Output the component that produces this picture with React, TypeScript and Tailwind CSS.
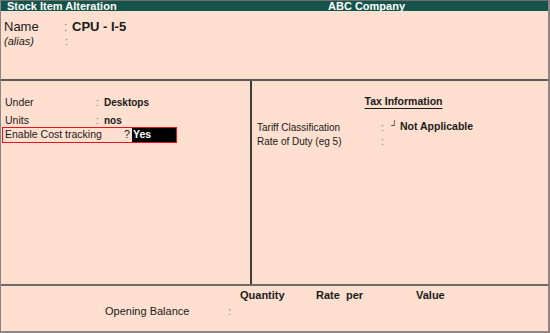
import React from "react";

export default function App() {
  const f = { fontFamily: '"Liberation Sans", Arial, sans-serif' };
  return (
    <div
      style={f}
      className="w-[550px] h-[333px] flex flex-col bg-[#ffdfcf] border-t border-t-[#6f6f6f] border-l border-l-[#8f8585] border-r-2 border-r-[#8f8585] border-b-2 border-b-[#8f8585] text-[#1a1a1a] overflow-hidden"
    >
      {/* header */}
      <div className="h-[10px] bg-[#14544a] flex items-center text-white font-bold text-[11px] leading-none">
        <span className="pl-[6px] w-[327px]">Stock Item Alteration</span>
        <span>ABC Company</span>
      </div>

      {/* name section */}
      <div className="h-[70px] pt-[8px] pl-[3px] border-b-2 border-b-[#5e5a58]">
        <div className="flex items-center h-[15px]">
          <span className="w-[60px] text-[13px]">Name</span>
          <span className="w-[8px] text-[12px] text-[#777]">:</span>
          <span className="font-bold text-[13px]">CPU - I-5</span>
        </div>
        <div className="flex items-center h-[15px]">
          <span className="w-[61px] text-[11px] italic">(alias)</span>
          <span className="text-[11px] text-[#777]">:</span>
        </div>
      </div>

      {/* middle */}
      <div className="h-[205px] flex border-b-2 border-b-[#6e6a68]">
        <div className="w-[251px] border-r-2 border-r-[#3f3b39] pt-[14px] pl-[1px] text-[10.5px]">
          <div className="flex items-center h-[15px] pl-[3px]">
            <span className="w-[91px]">Under</span>
            <span className="w-[8px] text-[#777]">:</span>
            <span className="font-bold text-[10px]">Desktops</span>
          </div>
          <div className="flex items-center h-[15px] mt-[3px] pl-[3px]">
            <span className="w-[91px]">Units</span>
            <span className="w-[8px] text-[#777]">:</span>
            <span className="font-bold text-[10px]">nos</span>
          </div>
          <div className="flex items-center h-[16px] w-[175px] border border-[#e8141b] -mt-[1px]">
            <span className="pl-[2px] w-[121px]">Enable Cost tracking</span>
            <span className="w-[8px]">?</span>
            <span className="flex-1 h-full bg-black text-white font-bold pl-[1px] flex items-center">Yes</span>
          </div>
        </div>
        <div className="flex-1 pt-[13px] pl-[5px] text-[10px]">
          <div className="flex justify-center h-[15px] items-center pl-[2px]">
            <span className="font-bold text-[10.5px] underline underline-offset-[3px]">Tax Information</span>
          </div>
          <div className="mt-[11px] flex items-center h-[14px]">
            <span className="w-[124px]">Tariff Classification</span>
            <span className="w-[10px] text-[#777]">:</span>
            <span className="w-[9px] text-[9px] font-bold leading-none -mt-[4px]">┘</span>
            <span className="font-bold text-[10.5px]">Not Applicable</span>
          </div>
          <div className="flex items-center h-[14px]">
            <span className="w-[124px]">Rate of Duty (eg 5)</span>
            <span className="text-[#777]">:</span>
          </div>
        </div>
      </div>

      {/* bottom */}
      <div className="flex-1 text-[11px] pt-[3px]">
        <div className="flex items-center h-[12px] font-bold">
          <span className="ml-[239px] w-[76px]">Quantity</span>
          <span className="w-[100px]">Rate&nbsp; per</span>
          <span>Value</span>
        </div>
        <div className="flex items-center h-[16px] mt-[2px]">
          <span className="ml-[104px] w-[123px]">Opening Balance</span>
          <span className="text-[#777]">:</span>
        </div>
      </div>
    </div>
  );
}
